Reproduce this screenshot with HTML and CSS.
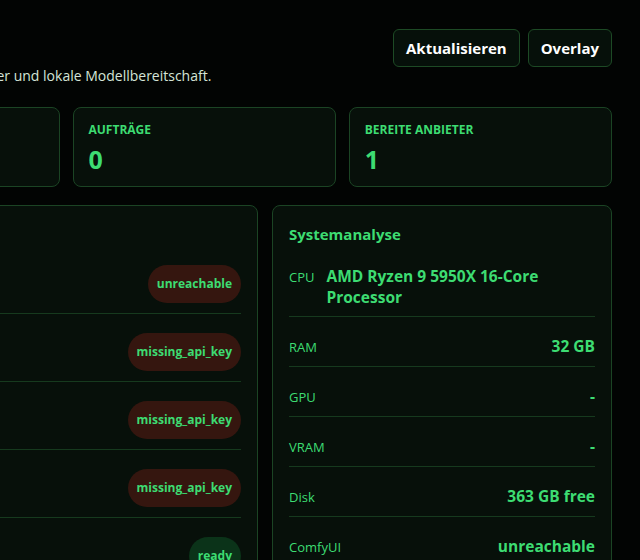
FILE: index.html
```html
<!DOCTYPE html>
<html lang="de">
<head>
  <meta charset="UTF-8">
  <meta name="viewport" content="width=device-width, initial-scale=1.0">
  <title>Anbieter-Dashboard</title>
  <link rel="stylesheet" href="styles.css">
</head>
<body>
  <div class="shell">
    <main class="page">
      <header class="top">
        <div>
          <h1>Dashboard</h1>
          <p class="lead">Live-Status für Warteschlange, Aufträge, Systemressourcen, Cloud-Anbieter und lokale Modellbereitschaft.</p>
        </div>
        <div class="actions">
          <button class="btn">Aktualisieren</button>
          <button class="btn">Overlay</button>
        </div>
      </header>

      <section class="stats">
        <div class="stat"><div class="stat-label">Modelle</div><div class="stat-value">4</div></div>
        <div class="stat"><div class="stat-label">Warteschlange</div><div class="stat-value">0</div></div>
        <div class="stat"><div class="stat-label">Aufträge</div><div class="stat-value">0</div></div>
        <div class="stat"><div class="stat-label">Bereite Anbieter</div><div class="stat-value">1</div></div>
      </section>

      <section class="grid">
        <div class="panel">
          <h2 class="panel-title providers-title">Anbieter</h2>
          <div class="provider">
            <div class="provider-info"><div class="provider-name">ComfyUI</div><div class="provider-meta">http://127.0.0.1:8188</div></div>
            <span class="badge bad">unreachable</span>
          </div>
          <div class="provider">
            <div class="provider-info"><div class="provider-name">OpenAI</div><div class="provider-meta">API-Schlüssel fehlt</div></div>
            <span class="badge bad">missing_api_key</span>
          </div>
          <div class="provider">
            <div class="provider-info"><div class="provider-name">Anthropic</div><div class="provider-meta">API-Schlüssel fehlt</div></div>
            <span class="badge bad">missing_api_key</span>
          </div>
          <div class="provider">
            <div class="provider-info"><div class="provider-name">Replicate</div><div class="provider-meta">API-Schlüssel fehlt</div></div>
            <span class="badge bad">missing_api_key</span>
          </div>
          <div class="provider">
            <div class="provider-info"><div class="provider-name">Ollama</div><div class="provider-meta">lokal</div></div>
            <span class="badge ok">ready</span>
          </div>
        </div>

        <div class="panel">
          <h2 class="panel-title">Systemanalyse</h2>
          <div class="specs">
            <div class="spec"><span class="spec-label">CPU</span><span class="spec-value">AMD Ryzen 9 5950X 16-Core Processor</span></div>
            <div class="spec"><span class="spec-label">RAM</span><span class="spec-value">32 GB</span></div>
            <div class="spec"><span class="spec-label">GPU</span><span class="spec-value">-</span></div>
            <div class="spec"><span class="spec-label">VRAM</span><span class="spec-value">-</span></div>
            <div class="spec"><span class="spec-label">Disk</span><span class="spec-value">363 GB free</span></div>
            <div class="spec"><span class="spec-label">ComfyUI</span><span class="spec-value">unreachable</span></div>
          </div>
        </div>
      </section>
    </main>
  </div>
</body>
</html>
```

FILE: styles.css
```css
body { margin: 0; background: #020403; color: #3ddc72; font-family: 'Open Sans', 'Noto Sans', sans-serif; overflow: hidden; }
.shell { display: flex; justify-content: flex-end; padding: 29px 28px 0 0; }
.page { width: 1092px; flex-shrink: 0; }

.top { display: flex; justify-content: space-between; align-items: flex-start; }
h1 { margin: 0; font-size: 26px; line-height: 32px; color: #e8f3ea; }
.lead { margin: 5px 0 0; font-size: 14px; line-height: 20px; color: #d4e4d7; }
.actions { display: flex; gap: 8px; }
.btn { font-family: inherit; font-size: 15px; font-weight: 700; line-height: 20px; color: #fff; background: #06100a; border: 1px solid #1d4a25; border-radius: 6px; padding: 8px 12px; }

.stats { display: grid; grid-template-columns: repeat(4, 1fr); gap: 13px; margin-top: 21px; }
.stat { background: #07100a; border: 1px solid #1b4424; border-radius: 8px; padding: 14px 15px 13px; }
.stat-label { font-size: 12px; font-weight: 700; line-height: 16px; text-transform: uppercase; }
.stat-value { margin-top: 7px; font-size: 25px; font-weight: 700; line-height: 28px; }

.grid { display: grid; grid-template-columns: 1fr 340px; gap: 14px; margin-top: 18px; }
.panel { background: #07100a; border: 1px solid #1b4424; border-radius: 8px; padding: 17px 16px; }
.panel-title { margin: 0; font-size: 15px; font-weight: 700; line-height: 22px; }
.providers-title { margin-bottom: 1px; }

.provider { display: flex; justify-content: space-between; align-items: flex-end; padding: 19px 0 10px; border-bottom: 1px solid #163a1e; }
.provider-name { font-size: 15px; font-weight: 700; line-height: 20px; }
.provider-meta { font-size: 13px; line-height: 18px; color: #9fb8a5; }
.badge { font-size: 12px; font-weight: 700; line-height: 16px; padding: 11px 9px; border-radius: 999px; }
.badge.bad { background: #35160f; }
.badge.ok { background: #0b3319; }

.specs { display: flex; flex-direction: column; gap: 9px; margin-top: 11px; }
.spec { display: flex; justify-content: space-between; align-items: baseline; gap: 12px; padding: 10px 0 8px; border-bottom: 1px solid #163a1e; }
.spec-label { font-size: 13px; line-height: 21px; }
.spec-value { font-size: 15.5px; font-weight: 700; line-height: 21px; }
```
